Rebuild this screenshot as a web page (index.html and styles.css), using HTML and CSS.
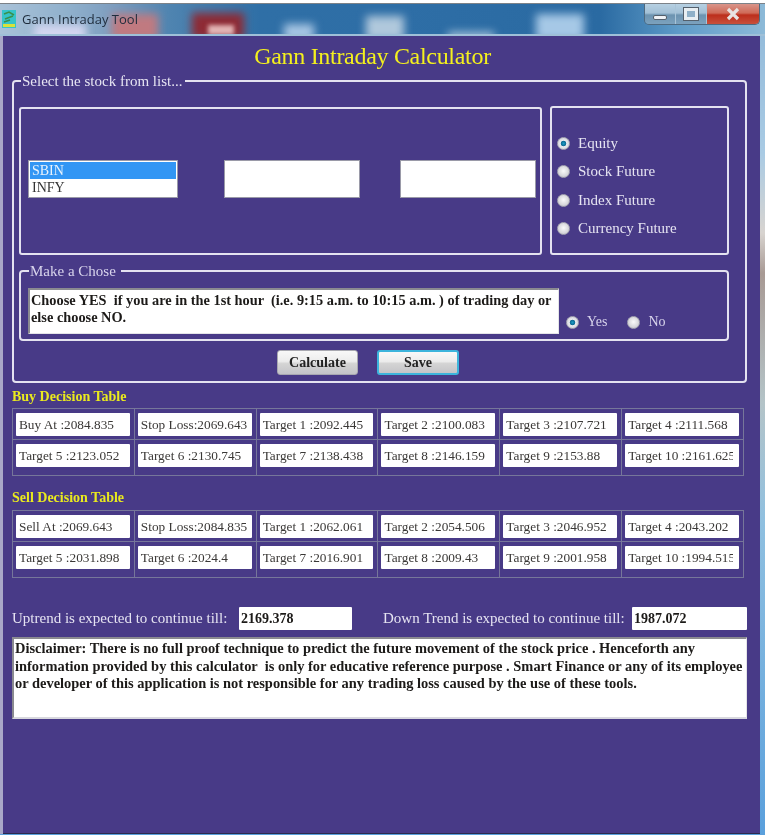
FILE: index.html
```html
<!DOCTYPE html>
<html lang="en">

<head>
  <meta charset="UTF-8">
  <title>Gann Intraday Tool</title>
  <link rel="stylesheet" href="styles.css">
</head>

<body>
  <div class="window">
    <div class="titlebar">
      <div class="tile t1"></div>
      <div class="tile t2"></div>
      <div class="tile t3"></div>
      <div class="tile t3b"></div>
      <div class="tile t4"></div>
      <div class="tile t5"></div>
      <div class="tile t6"></div>
      <div class="tile t7"></div>
      <svg class="app-icon" width="14" height="18" viewBox="0 0 14 18">
        <rect width="14" height="18" fill="#35c4c8"/>
        <path d="M2 4 L7 2 L12 5 M3 9 L11 6 M2 12 L8 10" stroke="#3a8f4a" stroke-width="1.5" fill="none"/>
        <rect x="1" y="14" width="12" height="3" fill="#d8e23a"/>
      </svg>
      <span class="app-title">Gann Intraday Tool</span>
      <div class="controls">
        <div class="ctl min"><span class="min-bar"></span></div>
        <div class="ctl max"><span class="max-box"></span></div>
        <div class="ctl close"><svg width="20" height="14" viewBox="0 0 20 14"><path d="M5 2 L15 12 M15 2 L5 12" stroke="#e8e4e2" stroke-width="3.2"/></svg></div>
      </div>
    </div>

    <div class="main">
      <h1 class="heading">Gann Intraday Calculator</h1>

      <fieldset class="outer">
        <legend>Select the stock from list...</legend>

        <div class="top-row">
          <div class="box stock-box">
            <div class="listbox">
              <div class="opt selected">SBIN</div>
              <div class="opt">INFY</div>
            </div>
            <div class="blank first"></div>
            <div class="blank second"></div>
          </div>
          <div class="box type-box">
            <label class="radio-row"><span class="radio on"></span>Equity</label>
            <label class="radio-row"><span class="radio"></span>Stock Future</label>
            <label class="radio-row"><span class="radio"></span>Index Future</label>
            <label class="radio-row"><span class="radio"></span>Currency Future</label>
          </div>
        </div>

        <fieldset class="chose">
          <legend>Make a Chose</legend>
          <div class="chose-row">
            <div class="chose-text">Choose YES  if you are in the 1st hour  (i.e. 9:15 a.m. to 10:15 a.m. ) of trading day or else choose NO.</div>
            <label class="yes"><span class="radio on"></span>Yes</label>
            <label class="no"><span class="radio"></span>No</label>
          </div>
        </fieldset>

        <div class="buttons">
          <button class="btn">Calculate</button>
          <button class="btn save">Save</button>
        </div>
      </fieldset>

      <h3 class="table-title buy-title">Buy Decision Table</h3>
      <table class="decision">
        <tr>
          <td><div class="cell">Buy At :2084.835</div></td>
          <td><div class="cell">Stop Loss:2069.643</div></td>
          <td><div class="cell">Target 1 :2092.445</div></td>
          <td><div class="cell">Target 2 :2100.083</div></td>
          <td><div class="cell">Target 3 :2107.721</div></td>
          <td><div class="cell">Target 4 :2111.568</div></td>
        </tr>
        <tr class="second-row">
          <td><div class="cell">Target 5 :2123.052</div></td>
          <td><div class="cell">Target 6 :2130.745</div></td>
          <td><div class="cell">Target 7 :2138.438</div></td>
          <td><div class="cell">Target 8 :2146.159</div></td>
          <td><div class="cell">Target 9 :2153.88</div></td>
          <td><div class="cell">Target 10 :2161.625</div></td>
        </tr>
      </table>

      <h3 class="table-title sell-title">Sell Decision Table</h3>
      <table class="decision sell-table">
        <tr>
          <td><div class="cell">Sell At :2069.643</div></td>
          <td><div class="cell">Stop Loss:2084.835</div></td>
          <td><div class="cell">Target 1 :2062.061</div></td>
          <td><div class="cell">Target 2 :2054.506</div></td>
          <td><div class="cell">Target 3 :2046.952</div></td>
          <td><div class="cell">Target 4 :2043.202</div></td>
        </tr>
        <tr class="second-row">
          <td><div class="cell">Target 5 :2031.898</div></td>
          <td><div class="cell">Target 6 :2024.4</div></td>
          <td><div class="cell">Target 7 :2016.901</div></td>
          <td><div class="cell">Target 8 :2009.43</div></td>
          <td><div class="cell">Target 9 :2001.958</div></td>
          <td><div class="cell">Target 10 :1994.515</div></td>
        </tr>
      </table>

      <div class="trend-row">
        <span class="trend-label up">Uptrend is expected to continue till:</span>
        <div class="trend-value up-value">2169.378</div>
        <span class="trend-label down">Down Trend is expected to continue till:</span>
        <div class="trend-value down-value">1987.072</div>
      </div>

      <div class="disclaimer">Disclaimer: There is no full proof technique to predict the future movement of the stock price . Henceforth any information provided by this calculator  is only for educative reference purpose . Smart Finance or any of its employee or developer of this application is not responsible for any trading loss caused by the use of these tools.</div>
    </div>
  </div>
</body>

</html>
```

FILE: styles.css
```css
* {
  box-sizing: border-box;
}

html,
body {
  margin: 0;
  background: #fff;
}

body {
  padding-top: 3px;
  height: 838px;
  overflow: hidden;
  font-family: "Liberation Serif", serif;
  font-size: 15px;
}

.window {
  width: 765px;
  height: 832px;
  display: flex;
  flex-direction: column;
  filter: blur(0.55px);
  background: linear-gradient(#8fb8d8 0, #a9cbe4 150px, #d8d4d0 230px, #a89a94 270px, #b4c4c8 400px, #8fc0e0 520px, #5aa0dc 100%);
}

/* title bar */
.titlebar {
  position: relative;
  flex: none;
  height: 33px;
  display: flex;
  align-items: flex-start;
  overflow: hidden;
  border-top: 1px solid #7c8288;
  border-bottom: 2px solid #9fc0d8;
  background: linear-gradient(90deg, #a9c2d8 0, #8fb0cc 70px, #7f9fc0 110px, #4f84b0 170px, #2f6fa6 260px, #2e6ea6 400px, #2a6aa2 600px, #5f9cc8 680px, #8dbad8 100%);
}

.tile {
  position: absolute;
  filter: blur(4px);
}

.t1 {
  left: 34px;
  top: 20px;
  width: 52px;
  height: 18px;
  background: #d3d6f0;
}

.t2 {
  left: 112px;
  top: 10px;
  width: 46px;
  height: 26px;
  background: #c07a80;
}

.t3 {
  left: 192px;
  top: 9px;
  width: 52px;
  height: 26px;
  background: #8e2a34;
}

.t3b {
  left: 208px;
  top: 21px;
  width: 26px;
  height: 10px;
  background: #e2b4b4;
  filter: blur(2px);
}

.t4 {
  left: 284px;
  top: 20px;
  width: 30px;
  height: 16px;
  background: #a8c6e4;
}

.t5 {
  left: 366px;
  top: 12px;
  width: 38px;
  height: 24px;
  background: #b0c8dc;
}

.t6 {
  left: 448px;
  top: 28px;
  width: 46px;
  height: 8px;
  background: #a8c4dc;
}

.t7 {
  left: 536px;
  top: 10px;
  width: 48px;
  height: 26px;
  background: #a6c8e6;
}

.app-icon {
  position: relative;
  flex: none;
  margin: 6px 0 0 2px;
}

.app-title {
  position: relative;
  margin: 6px 0 0 6px;
  font-family: "Open Sans", sans-serif;
  font-size: 13px;
  line-height: 18px;
  color: #1e2c3c;
}

.controls {
  position: relative;
  margin-left: auto;
  margin-right: 5px;
  width: 116px;
  height: 21px;
  display: flex;
  border: 1px solid #4e6a80;
  border-top: 0;
  border-radius: 0 0 5px 5px;
  overflow: hidden;
}

.ctl {
  display: flex;
  align-items: center;
  justify-content: center;
}

.min,
.max {
  width: 31px;
  border-right: 1px solid #a8c4d8;
  background: linear-gradient(#b6d0e2 0, #a2c0d6 45%, #6c93b0 55%, #7ca2be 100%);
}

.close {
  flex: 1;
  background: linear-gradient(#d9958a 0, #cf6a58 45%, #bc2e1c 55%, #c8503c 100%);
}

.min-bar {
  width: 14px;
  height: 5px;
  margin-top: 7px;
  background: #eef2f6;
  border: 1px solid #54606c;
  border-radius: 2px;
}

.max-box {
  width: 14px;
  height: 12px;
  border: 3px solid #e8eef2;
  outline: 1px solid #54606c;
  background: #8fb0c8;
}

/* purple area */
.main {
  flex: 1;
  min-height: 0;
  margin: 0 5px 1px 3px;
  padding: 0 0 0 9px;
  background: #483a87;
  border-bottom: 1px solid #2c2a4e;
  box-shadow: -3px 0 0 #a9a8c8;
}

.heading {
  margin: 0;
  padding: 5px 27px 0 0;
  height: 37px;
  font-size: 24px;
  font-weight: normal;
  line-height: 30px;
  letter-spacing: -0.3px;
  text-align: center;
  color: #f4f01e;
}

fieldset {
  margin: 0;
  min-width: 0;
  border: 2px solid #e4e2f0;
  border-radius: 4px;
}

legend {
  height: 16px;
  padding: 0 3px 0 1px;
  line-height: 16px;
  color: #e6e4f2;
}

.outer {
  width: 735px;
  height: 310px;
  padding: 18px 15px 0 5px;
}

.outer>legend {
  margin-left: 2px;
}

.top-row {
  display: flex;
  gap: 8px;
}

.box {
  border: 2px solid #e4e2f0;
  border-radius: 3px;
}

.stock-box {
  width: 523px;
  height: 148px;
  padding: 0 0 4px 7px;
  display: flex;
  align-items: center;
}

.listbox {
  width: 150px;
  height: 38px;
  padding: 1px;
  background: #fff;
  border: 1px solid #9a9aa8;
  color: #333;
  font-size: 14px;
  line-height: 17px;
}

.opt {
  padding-left: 2px;
}

.selected {
  background: #3296f4;
  color: #e8f2fc;
}

.blank {
  width: 136px;
  height: 38px;
  background: #fff;
  border: 1px solid #9a9aa8;
}

.first {
  margin-left: 46px;
}

.second {
  margin-left: 40px;
}

.type-box {
  width: 179px;
  height: 149px;
  margin-top: -1px;
  padding: 26px 0 0 5px;
  display: flex;
  flex-direction: column;
  gap: 10.6px;
}

.radio-row {
  display: flex;
  align-items: center;
  height: 18px;
  color: #e6e4f2;
  white-space: nowrap;
}

.radio {
  flex: none;
  display: inline-block;
  width: 13px;
  height: 13px;
  margin-right: 8px;
  border-radius: 50%;
  border: 1px solid #a8a8b4;
  background: radial-gradient(circle at 50% 45%, #fafafa 0, #d8d8dc 60%, #b4b4bc 100%);
}

.radio.on {
  background: radial-gradient(circle at 50% 50%, #1a9cc4 0, #0f6a94 32%, #e8eaee 40%, #c8c8d0 100%);
}

.chose {
  width: 710px;
  height: 78px;
  margin-top: 8px;
  padding: 9px 0 0 7px;
}

.chose>legend {
  margin-left: 1px;
  padding-right: 5px;
  color: #d8d4ec;
}

.chose-row {
  display: flex;
  align-items: flex-end;
}

.chose-text {
  width: 531px;
  height: 46px;
  padding: 2px 2px 0 1px;
  background: #fff;
  border-style: solid;
  border-width: 2px 1px 1px 2px;
  border-color: #8a8a90 #e4e4e8 #e4e4e8 #8a8a90;
  color: #1c1a18;
  font-size: 14.35px;
  font-weight: bold;
  line-height: 17px;
  white-space: pre-wrap;
}

.yes,
.no {
  display: flex;
  align-items: center;
  height: 18px;
  margin-bottom: 3px;
  color: #d8d4ec;
  font-size: 14px;
}

.yes {
  margin-left: 7px;
}

.no {
  margin-left: 20px;
}

.buttons {
  display: flex;
  margin: 9px 0 0 258px;
  gap: 19px;
}

.btn {
  width: 81px;
  height: 25px;
  padding: 0;
  border: 1px solid #a8a8b0;
  border-radius: 3px;
  background: linear-gradient(#f8f8f8 0, #ececec 45%, #d4d4d4 55%, #c4c4c8 100%);
  font-family: "Liberation Serif", serif;
  font-size: 14px;
  font-weight: bold;
  color: #222;
}

.save {
  width: 82px;
  border: 2px solid #3cb4dc;
}

.table-title {
  margin: 0;
  height: 17px;
  font-size: 14px;
  font-weight: bold;
  line-height: 17px;
  color: #eaea1e;
}

.buy-title {
  margin-top: 5px;
}

.sell-title {
  margin-top: 13px;
}

.decision {
  width: 732px;
  margin-top: 3px;
  table-layout: fixed;
  border-collapse: collapse;
}

.sell-table {
  margin-top: 4px;
}

.decision td {
  height: 31px;
  padding: 4px 4px 0 3px;
  vertical-align: top;
  border: 1px solid #76769a;
}

.decision .second-row td {
  height: 36px;
}

.cell {
  height: 23px;
  padding-left: 3px;
  overflow: hidden;
  background: #fff;
  border-right: 3px solid #fff;
  border-radius: 1px;
  color: #3a3836;
  font-size: 13.3px;
  line-height: 23px;
  white-space: nowrap;
}

.decision td:last-child .cell {
  border-right-width: 6px;
}

.trend-row {
  display: flex;
  align-items: center;
  margin-top: 29px;
  height: 23px;
  color: #e6e4f2;
}

.trend-label {
  white-space: nowrap;
}

.up {
  width: 227px;
}

.down {
  width: 249px;
}

.trend-value {
  height: 23px;
  padding-left: 2px;
  background: #fff;
  border-radius: 1px;
  color: #1c1a18;
  font-size: 14px;
  font-weight: bold;
  line-height: 23px;
}

.up-value {
  width: 113px;
  margin-right: 31px;
}

.down-value {
  width: 115px;
}

.disclaimer {
  width: 735px;
  height: 82px;
  margin-top: 7px;
  padding: 1px 2px 0 1px;
  background: #fff;
  border-style: solid;
  border-width: 2px 1px 2px 2px;
  border-color: #8a8a90 #e4e4e8 #d8d8de #8a8a90;
  color: #1c1a18;
  font-size: 14.45px;
  font-weight: bold;
  line-height: 17.5px;
  white-space: pre-wrap;
}
```
